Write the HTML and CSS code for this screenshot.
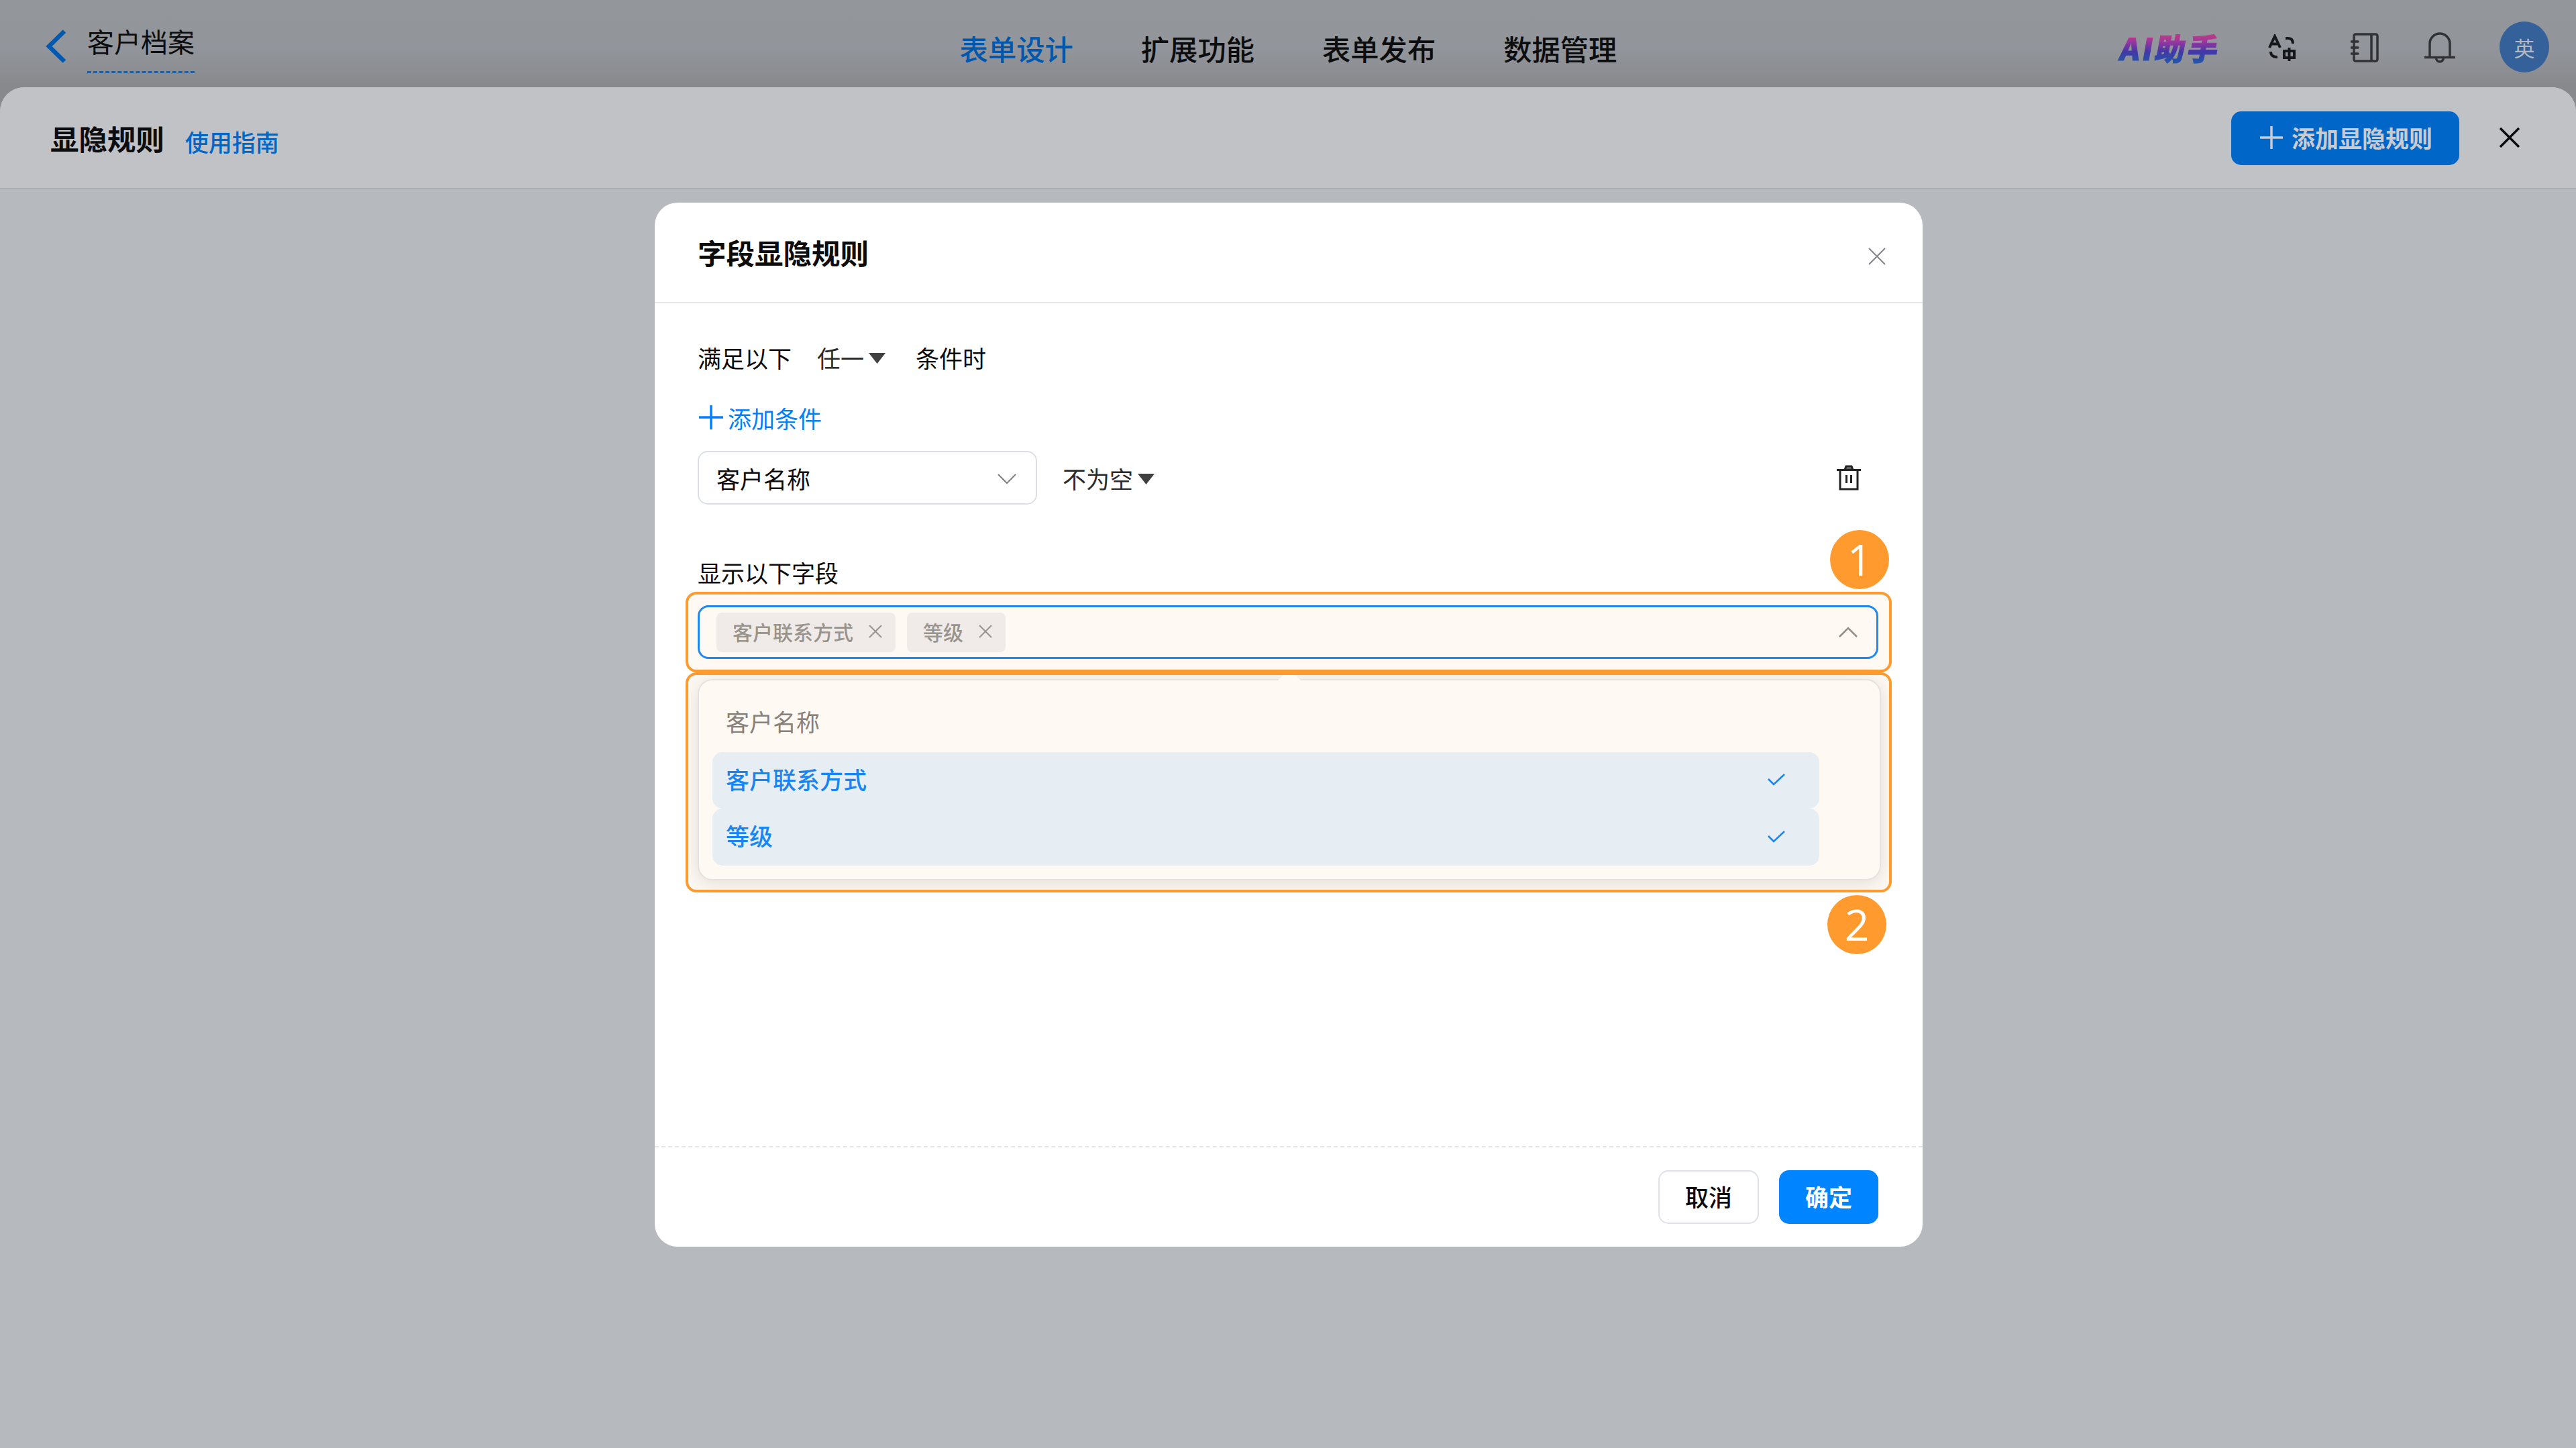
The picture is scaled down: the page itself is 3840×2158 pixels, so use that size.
FILE: index.html
```html
<!DOCTYPE html>
<html lang="zh-CN">

<head>
    <meta charset="UTF-8">
    <meta name="viewport" content="width=device-width, initial-scale=1.0">
    <title>显隐规则</title>
    <link rel="stylesheet" href="styles.css">
</head>

<body>
    <header class="topbar">
        <div class="topbar-left">
            <svg class="back" width="32" height="52" viewBox="0 0 32 52"><path d="M28 3.500L5 26l23 22.500"/></svg>
            <span class="form-name">客户档案</span>
        </div>
        <nav class="nav">
            <a class="active">表单设计</a>
            <a>扩展功能</a>
            <a>表单发布</a>
            <a>数据管理</a>
        </nav>
        <div class="topbar-right">
            <span class="ai">AI助手</span>
            <svg class="icon translate" width="42" height="42" viewBox="0 0 42 42">
                <path d="M2 20L10 3l8 17M5 14.500h10M26 6h4q7 0 7 8M4 26q0 8 10 8M24 25h15v10H24zM31.500 20v20"/>
            </svg>
            <svg class="icon book" width="42" height="44" viewBox="0 0 42 44">
                <path d="M8 2h29q3 0 3 3v34q0 3-3 3H8q-3 0-3-3V5q0-3 3-3zM31 2v40M1 13h10M1 22h10M1 31h10"/>
            </svg>
            <svg class="icon bell" width="46" height="48" viewBox="0 0 46 48">
                <path d="M8 38V18a15 15 0 0 1 30 0v20M1 38.500h44M17.500 39a5.500 6 0 0 0 11 0"/>
            </svg>
            <span class="avatar">英</span>
        </div>
    </header>

    <main class="panel">
        <div class="panel-header">
            <h1>显隐规则</h1>
            <a class="guide">使用指南</a>
            <button class="add-rule">
                <svg width="36" height="36" viewBox="0 0 36 36"><path d="M18 1v34M1 18h34"/></svg>
                添加显隐规则
            </button>
            <svg class="panel-close" width="32" height="32" viewBox="0 0 32 32"><path d="M2 2l28 28M30 2L2 30"/></svg>
        </div>
    </main>

    <section class="modal">
        <div class="modal-header">
            <h2>字段显隐规则</h2>
            <svg class="modal-close" width="26" height="26" viewBox="0 0 26 26"><path d="M1 1l24 24M25 1L1 25"/></svg>
        </div>

        <div class="modal-body">
            <div class="row">
                <span>满足以下</span>
                <span class="match">任一<i class="caret"></i></span>
                <span>条件时</span>
            </div>
            <div class="row add-condition">
                <svg width="36" height="36" viewBox="0 0 36 36"><path d="M18 0v36M0 18h36"/></svg>
                <span>添加条件</span>
            </div>
            <div class="condition">
                <div class="select">
                    <span>客户名称</span>
                    <svg width="28" height="16" viewBox="0 0 28 16"><path d="M1 1l13 13L27 1"/></svg>
                </div>
                <span class="operator">不为空<i class="caret"></i></span>
                <svg class="trash" width="36" height="38" viewBox="0 0 36 38">
                    <path class="lid" d="M12 7l2-5h8l2 5z"/>
                    <path d="M0 7.500h36M5 8v28h26V8M14.500 15v12M21.500 15v12"/>
                </svg>
            </div>
            <div class="row fields-label">显示以下字段</div>
            <div class="fields">
                <div class="multi-select">
                    <span class="tag">客户联系方式<svg width="20" height="20" viewBox="0 0 20 20"><path d="M1 1l18 18M19 1L1 19"/></svg></span>
                    <span class="tag">等级<svg width="20" height="20" viewBox="0 0 20 20"><path d="M1 1l18 18M19 1L1 19"/></svg></span>
                    <svg class="arrow-up" width="28" height="16" viewBox="0 0 28 16"><path d="M1 15L14 2l13 13"/></svg>
                </div>
                <div class="dropdown">
                    <div class="option">客户名称</div>
                    <div class="option selected">客户联系方式<svg width="26" height="19" viewBox="0 0 26 19"><path d="M1 9l8 8L25 2"/></svg></div>
                    <div class="option selected">等级<svg width="26" height="19" viewBox="0 0 26 19"><path d="M1 9l8 8L25 2"/></svg></div>
                </div>
            </div>
        </div>

        <div class="modal-footer">
            <button class="cancel">取消</button>
            <button class="ok">确定</button>
        </div>

        <div class="mark mark-select"></div>
        <div class="mark mark-list"></div>
        <div class="step step-one">1</div>
        <div class="step step-two">2</div>
    </section>
</body>

</html>
```
FILE: styles.css
```css
* {
    box-sizing: border-box;
}

body {
    margin: 0;
    height: 2158px;
    overflow: hidden;
    display: flex;
    flex-direction: column;
    position: relative;
    font-family: "Noto Sans CJK SC", sans-serif;
    font-size: 35px;
    line-height: 50px;
    color: #0c0d0f;
    background: #93969a;
}

svg {
    display: block;
    flex: none;
    fill: none;
    stroke: currentColor;
}

button {
    font-family: inherit;
    font-size: 35px;
    font-weight: 500;
    line-height: 50px;
    border: none;
    border-radius: 15px;
}

h1,
h2 {
    margin: 0;
    font-size: 42.5px;
    font-weight: 700;
    line-height: 60px;
}

/* top bar */
.topbar {
    height: 130px;
    display: grid;
    grid-template-columns: 1fr auto 1fr;
    padding: 0 40px 0 68px;
    background: linear-gradient(#93969a 0%, #92959b 55%, #8b8d91 85%, #86888b 100%);
}

.topbar-left {
    display: flex;
    margin-left: -28px;
    padding-left: 28px;
}

.back {
    margin-top: 43px;
    color: #0059b0;
    stroke-width: 6.5;
}

.form-name {
    height: 76px;
    margin: 33px 0 0 30px;
    font-size: 40px;
    line-height: 56px;
    border-bottom: 3px dashed #1f5f9f;
}

.nav {
    display: flex;
    gap: 101px;
    margin-left: -27px;
    padding-top: 42px;
    font-size: 42.3px;
    font-weight: 500;
    line-height: 60px;
}

.nav .active {
    color: #0057ae;
}

.topbar-right {
    display: flex;
    justify-content: flex-end;
}

.ai {
    height: 60px;
    margin-top: 42px;
    padding: 0 3px;
    font-size: 45px;
    font-weight: 900;
    line-height: 58px;
    letter-spacing: 3.5px;
    background: linear-gradient(#b83a88 20%, #9a35a0 34%, #4338a5 58%, #1f58ac 88%);
    background-clip: text;
    -webkit-background-clip: text;
    color: transparent;
    -webkit-text-stroke: 1px transparent;
    transform: skewX(-10deg);
}

.icon {
    color: #303236;
    stroke-width: 3.5;
    stroke-linecap: round;
}

.translate {
    margin: 51px 0 0 68px;
    color: #17181b;
    stroke-width: 4;
    stroke-linecap: butt;
}

.book {
    margin: 49px 0 0 81px;
}

.bell {
    margin: 47px 0 0 68px;
}

.avatar {
    width: 74px;
    height: 76px;
    margin: 32px 0 0 66px;
    border-radius: 50%;
    background: #35619b;
    color: #b4bac2;
    font-size: 31px;
    line-height: 77px;
    text-align: center;
}

/* panel under the dialog */
.panel {
    flex: 1;
    position: relative;
    border-radius: 36px 36px 0 0;
    background: #b6b9be;
}

.panel::before {
    content: "";
    position: absolute;
    inset: 0 0 auto;
    height: 40px;
    background: #87898c;
    z-index: -1;
}

.panel-header {
    height: 152px;
    display: flex;
    padding: 0 83px 0 75px;
    border-bottom: 2px solid #adaeb2;
    border-radius: 36px 36px 0 0;
    background: #c1c2c6;
}

.panel-header h1 {
    margin-top: 46px;
}

.guide {
    margin: 56px 0 0 31px;
    color: #0066c8;
    font-weight: 500;
}

.add-rule {
    width: 340px;
    height: 80px;
    margin: 36px 0 0 auto;
    display: flex;
    align-items: center;
    justify-content: center;
    gap: 12px;
    padding: 0 0 3px 2px;
    background: #0066c8;
    color: #c9cbd0;
    font-weight: 700;
}

.add-rule svg {
    stroke-width: 3.5;
    margin-top: 1px;
}

.panel-close {
    margin: 59px 0 0 59px;
    stroke-width: 3.5;
}

/* dialog */
.modal {
    position: absolute;
    left: 976px;
    top: 302px;
    width: 1890px;
    height: 1556px;
    display: flex;
    flex-direction: column;
    border-radius: 34px;
    background: #fff;
    color: #0c0c0c;
}

.modal-header {
    height: 150px;
    display: flex;
    justify-content: space-between;
    padding: 44px 55px 0 64px;
    border-bottom: 2px solid #e8e8e8;
}

.modal-close {
    margin-top: 23px;
    color: #85868c;
    stroke-width: 2;
}

.modal-body {
    flex: 1;
    padding: 56px 66px 0 64px;
}

.row {
    height: 50px;
    display: flex;
    align-items: center;
}

.match {
    display: flex;
    align-items: center;
    margin: 0 45px 0 38px;
    color: #2b2b2b;
}

.caret {
    width: 25px;
    height: 16px;
    margin: 2px 0 0 7px;
    background: #404040;
    clip-path: polygon(0 0, 100% 0, 50% 100%);
}

.add-condition {
    margin-top: 40px;
    padding-left: 2px;
    gap: 7px;
    color: #0080ff;
}

.add-condition svg {
    stroke-width: 3.5;
    margin-top: -3px;
}

.condition {
    display: flex;
    align-items: center;
    margin-top: 24px;
}

.select {
    width: 506px;
    height: 80px;
    display: flex;
    align-items: center;
    justify-content: space-between;
    padding: 1px 29px 0 26px;
    border: 2px solid #dcdfe6;
    border-radius: 15px;
}

.select svg {
    color: #808080;
    stroke-width: 2;
    margin-top: 3px;
}

.operator {
    display: flex;
    align-items: center;
    margin-left: 38px;
    padding-top: 2px;
    color: #2b2b2b;
}

.trash {
    margin-left: auto;
    margin-right: 26px;
    color: #222;
    stroke-width: 3;
}

.trash .lid {
    fill: #888;
}

.fields-label {
    margin-top: 76px;
}

.fields {
    position: relative;
    margin-top: 24px;
}

.multi-select {
    height: 80px;
    display: flex;
    align-items: center;
    gap: 17px;
    padding: 0 28px 0 25px;
    border: 3px solid #1188ff;
    border-radius: 16px;
}

.tag {
    height: 59px;
    display: flex;
    align-items: center;
    padding: 0 20px 2px 24px;
    border-radius: 8px;
    background: #f0f1f5;
    color: #939393;
    font-size: 30px;
    font-weight: 500;
}

.tag svg {
    margin-left: 23px;
    stroke-width: 2;
}

.arrow-up {
    margin-left: auto;
    color: #8c8c8c;
    stroke-width: 2.5;
}

.dropdown {
    position: absolute;
    left: 0;
    top: 110px;
    width: 1764px;
    height: 300px;
    padding: 22px 90px 0 20px;
    border: 2px solid #e4e7ed;
    border-radius: 22px;
    background: #fff;
    box-shadow: 0 4px 28px rgba(0, 0, 0, 0.12);
}

/* little pointer on the popper */
.dropdown::before {
    content: "";
    position: absolute;
    left: 862px;
    top: -17px;
    width: 36px;
    height: 18px;
    background: #fff;
    clip-path: polygon(50% 0, 100% 100%, 0 100%);
}

.option {
    height: 84.5px;
    display: flex;
    align-items: center;
    justify-content: space-between;
    padding: 0 51px 4px 20px;
    border-radius: 15px;
    color: #808080;
}

.option:first-child {
    padding-bottom: 6px;
}

.option.selected {
    background: #e5f3ff;
    color: #0a84ff;
    font-weight: 500;
}

.option svg {
    margin-top: 2px;
    stroke-width: 2.5;
}

.modal-footer {
    height: 150px;
    display: flex;
    justify-content: flex-end;
    gap: 30px;
    padding: 34px 66px 0;
    border-top: 2px dashed #e4e4e4;
}

.modal-footer button {
    width: 148px;
    height: 80px;
    padding: 0 0 2px;
}

.modal-footer .cancel {
    width: 150px;
    border: 2px solid #dfe1e8;
    background: #fff;
    color: #0c0c0c;
}

.modal-footer .ok {
    background: #0084ff;
    color: #fff;
    font-weight: 700;
}

/* numbered highlights */
.mark {
    position: absolute;
    left: 46px;
    width: 1798px;
    border: 4px solid #ff9a2e;
    border-radius: 16px;
    background: rgba(255, 154, 46, 0.06);
}

.mark-select {
    top: 580px;
    height: 120px;
}

.mark-list {
    top: 700px;
    height: 328px;
}

.step {
    position: absolute;
    width: 88px;
    height: 88px;
    border-radius: 50%;
    background: #ff9a2e;
    color: #fff;
    font-family: "Open Sans", sans-serif;
    font-size: 64px;
    line-height: 88px;
    text-align: center;
}

.step-one {
    left: 1752px;
    top: 488px;
}

.step-two {
    left: 1748px;
    top: 1032px;
}
```
